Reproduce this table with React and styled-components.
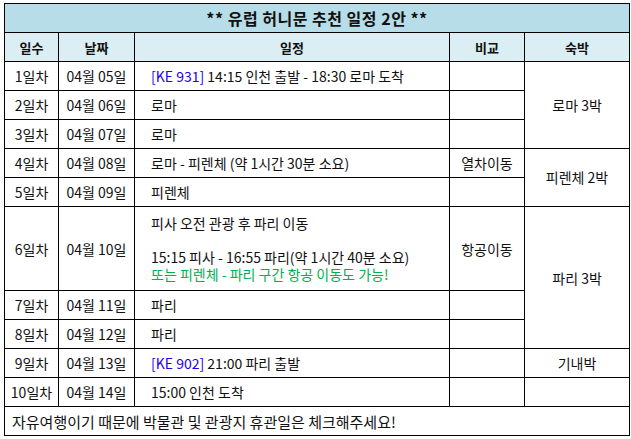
import React from "react";
import styled, { createGlobalStyle } from "styled-components";

const Global = createGlobalStyle`
  html, body { margin: 0; padding: 0; background: #fff; }
  body { font-family: "Noto Sans CJK KR", "Noto Sans", sans-serif; color: #111; }
`;

const Wrap = styled.div`
  padding: 3px 2px 0 4px;
`;

const Table = styled.table`
  border-collapse: collapse;
  width: 625px;
  table-layout: fixed;
  font-size: 14px;
  line-height: 17px;
  border: 1px solid #000;
`;

const Cell = styled.td`
  border: 1px solid #000;
  height: 29px;
  padding: 0 ${(p) => (p.$left ? "16px" : "2px")};
  text-align: ${(p) => (p.$left ? "left" : "center")};
  vertical-align: middle;
  white-space: nowrap;
  box-sizing: border-box;
`;

const TallCell = styled(Cell)`
  height: 84px;
  padding-top: 8px;
  padding-bottom: 7px;
`;

const TitleCell = styled.th`
  border: 1px solid #000;
  background: #b7dde8;
  height: 29px;
  box-sizing: border-box;
  font-size: 16px;
  letter-spacing: 0.5px;
  font-weight: bold;
  padding: 0;
  text-align: center;
`;

const HeadCell = styled.th`
  border: 1px solid #000;
  background: #daeef3;
  height: 29px;
  box-sizing: border-box;
  font-size: 13px;
  font-weight: bold;
  padding: 0;
  text-align: center;
`;

const FootCell = styled.td`
  border: 1px solid #000;
  height: 29px;
  box-sizing: border-box;
  font-size: 15px;
  padding: 0 7px;
  text-align: left;
  white-space: nowrap;
`;

const Flight = styled.span`
  color: #2200ee;
`;

const Note = styled.span`
  color: #00b050;
`;

const Line = styled.div`
  height: 17px;
`;

const simple = [
  ["1일차", "04월 05일", <><Flight>[KE 931]</Flight> 14:15 인천 출발 - 18:30 로마 도착</>, "", { text: "로마 3박", span: 3 }],
  ["2일차", "04월 06일", "로마", "", null],
  ["3일차", "04월 07일", "로마", "", null],
  ["4일차", "04월 08일", "로마 - 피렌체 (약 1시간 30분 소요)", "열차이동", { text: "피렌체 2박", span: 2 }],
  ["5일차", "04월 09일", "피렌체", "", null],
];

const later = [
  ["7일차", "04월 11일", "파리", "", null],
  ["8일차", "04월 12일", "파리", "", null],
  ["9일차", "04월 13일", <><Flight>[KE 902]</Flight> 21:00 파리 출발</>, "", { text: "기내박", span: 1 }],
  ["10일차", "04월 14일", "15:00 인천 도착", "", { text: "", span: 1 }],
];

const Row = ({ r }) => (
  <tr>
    <Cell>{r[0]}</Cell>
    <Cell>{r[1]}</Cell>
    <Cell $left>{r[2]}</Cell>
    <Cell>{r[3]}</Cell>
    {r[4] && <Cell rowSpan={r[4].span}>{r[4].text}</Cell>}
  </tr>
);

export default function App() {
  return (
    <>
      <Global />
      <Wrap>
        <Table>
          <colgroup>
            <col style={{ width: 54 }} />
            <col style={{ width: 76 }} />
            <col style={{ width: 315 }} />
            <col style={{ width: 75 }} />
            <col style={{ width: 105 }} />
          </colgroup>
          <thead>
            <tr>
              <TitleCell colSpan={5}>** 유럽 허니문 추천 일정 2안 **</TitleCell>
            </tr>
            <tr>
              <HeadCell>일수</HeadCell>
              <HeadCell>날짜</HeadCell>
              <HeadCell>일정</HeadCell>
              <HeadCell>비교</HeadCell>
              <HeadCell>숙박</HeadCell>
            </tr>
          </thead>
          <tbody>
            {simple.map((r) => (
              <Row key={r[0]} r={r} />
            ))}
            <tr>
              <TallCell>6일차</TallCell>
              <TallCell>04월 10일</TallCell>
              <TallCell $left>
                <Line>피사 오전 관광 후 파리 이동</Line>
                <Line />
                <Line>15:15 피사 - 16:55 파리(약 1시간 40분 소요)</Line>
                <Line>
                  <Note>또는 피렌체 - 파리 구간 항공 이동도 가능!</Note>
                </Line>
              </TallCell>
              <TallCell>항공이동</TallCell>
              <TallCell rowSpan={3}>파리 3박</TallCell>
            </tr>
            {later.map((r) => (
              <Row key={r[0]} r={r} />
            ))}
            <tr>
              <FootCell colSpan={5}>자유여행이기 때문에 박물관 및 관광지 휴관일은 체크해주세요!</FootCell>
            </tr>
          </tbody>
        </Table>
      </Wrap>
    </>
  );
}
